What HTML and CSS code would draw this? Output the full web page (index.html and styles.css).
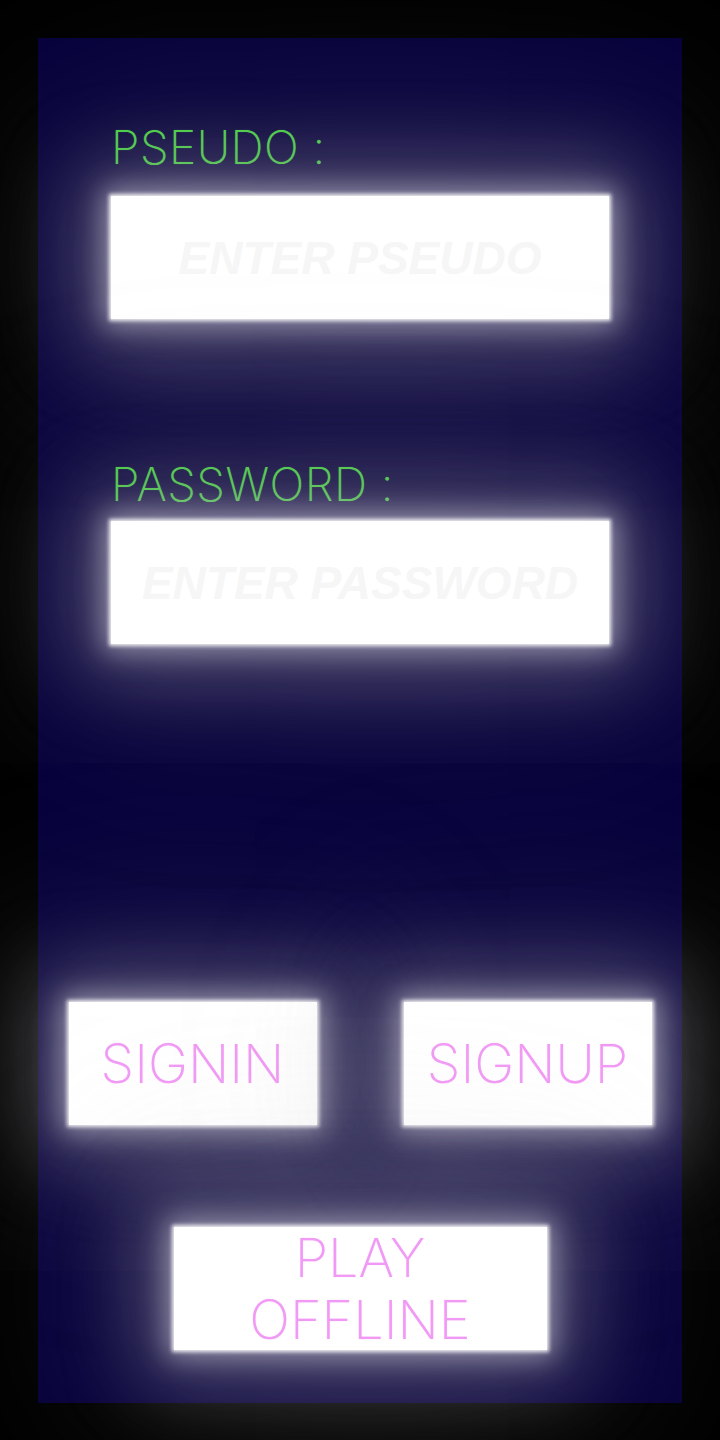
FILE: index.html
```html
<!DOCTYPE html>
<html lang="en">
<head>
<meta charset="utf-8">
<title>Login</title>
<link rel="stylesheet" href="styles.css">
</head>
<body>
<main class="screen">
  <section class="panel">
    <form class="form">
      <label class="label label-pseudo" for="pseudo">PSEUDO :</label>
      <input class="field field-pseudo" id="pseudo" type="text" placeholder="ENTER PSEUDO">
      <label class="label label-password" for="password">PASSWORD :</label>
      <input class="field" id="password" type="password" placeholder="ENTER PASSWORD">
    </form>
    <div class="actions">
      <div class="row">
        <button class="btn btn-small" type="button">SIGNIN</button>
        <button class="btn btn-small" type="button">SIGNUP</button>
      </div>
      <button class="btn btn-wide" type="button">PLAY<br>OFFLINE</button>
    </div>
  </section>
</main>
</body>
</html>
```
FILE: styles.css
```css
html, body {
  margin: 0;
  padding: 0;
}
body {
  width: 720px;
  height: 1440px;
  background: #000;
  font-family: Inter, "Noto Sans", sans-serif;
  overflow: hidden;
}
.screen {
  box-sizing: border-box;
  width: 720px;
  height: 1440px;
  padding: 38px;
}
.panel {
  box-sizing: border-box;
  width: 644px;
  height: 1365px;
  background: #06003a;
  display: flex;
  flex-direction: column;
  justify-content: space-between;
  padding: 81px 30px 53px 30px;
}
.form {
  display: flex;
  flex-direction: column;
  padding: 0 43px;
}
.label {
  font-size: 46px;
  line-height: 56px;
  font-weight: 200;
  color: #45d140;
  letter-spacing: 0.5px;
  text-shadow: 0 0 1px rgba(69,209,64,0.6);
}
.label-pseudo {
  margin-bottom: 21px;
}
.label-password {
  margin-top: 137px;
  margin-bottom: 9px;
}
.field {
  box-sizing: border-box;
  width: 498px;
  height: 123px;
  border: none;
  outline: none;
  background: #fff;
  box-shadow:
    0 0 4px 2px rgba(255,255,255,0.9),
    0 0 25px 8px rgba(205,203,218,0.55),
    0 0 80px 30px rgba(160,158,170,0.42),
    0 0 200px 55px rgba(200,200,200,0.18);
  font-family: "Liberation Sans", Arial, sans-serif;
  font-style: italic;
  font-weight: bold;
  font-size: 46px;
  text-align: center;
  color: #f6f6f6;
}
.field::placeholder {
  color: #f6f6f6;
  opacity: 1;
}
.actions {
  display: flex;
  flex-direction: column;
  align-items: center;
  gap: 102px;
}
.row {
  display: flex;
  justify-content: space-between;
  width: 583px;
}
.btn {
  box-sizing: border-box;
  height: 123px;
  border: none;
  background: #fff;
  color: #f19af5;
  font-family: Inter, "Noto Sans", sans-serif;
  font-weight: 200;
  font-size: 54px;
  line-height: 62px;
  padding: 0;
  text-shadow: 0 0 1px rgba(241,154,245,0.6);
  box-shadow:
    0 0 4px 2px rgba(255,255,255,0.9),
    0 0 25px 8px rgba(205,203,218,0.55),
    0 0 80px 30px rgba(160,158,170,0.42),
    0 0 200px 55px rgba(200,200,200,0.18);
}
.btn-small {
  width: 248px;
}
.btn-wide {
  width: 373px;
  padding-bottom: 4px;
}
```
